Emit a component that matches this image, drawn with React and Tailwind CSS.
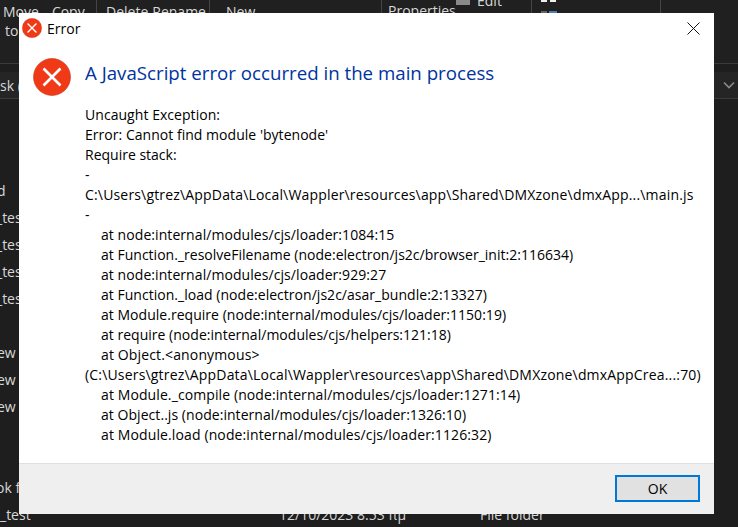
const lines = [
  ["Uncaught Exception:", "tracking-[0.05px]"],
  ["Error: Cannot find module 'bytenode'", "tracking-[0.03px]"],
  ["Require stack:", ""],
  ["-", ""],
  ["C:\\Users\\gtrez\\AppData\\Local\\Wappler\\resources\\app\\Shared\\DMXzone\\dmxApp...\\main.js", "tracking-[0.17px]"],
  ["-", ""],
  ["at node:internal/modules/cjs/loader:1084:15", "pl-[16px] tracking-[0.07px]"],
  ["at Function._resolveFilename (node:electron/js2c/browser_init:2:116634)", "pl-[16px] tracking-[0.015px]"],
  ["at node:internal/modules/cjs/loader:929:27", "pl-[16px] tracking-[0.07px]"],
  ["at Function._load (node:electron/js2c/asar_bundle:2:13327)", "pl-[16px] tracking-[0.03px]"],
  ["at Module.require (node:internal/modules/cjs/loader:1150:19)", "pl-[16px] tracking-[0.03px]"],
  ["at require (node:internal/modules/cjs/helpers:121:18)", "pl-[16px] tracking-[0.02px]"],
  ["at Object.<anonymous>", "pl-[16px] tracking-[0.14px]"],
  ["(C:\\Users\\gtrez\\AppData\\Local\\Wappler\\resources\\app\\Shared\\DMXzone\\dmxAppCrea...:70)", "tracking-[0.18px]"],
  ["at Module._compile (node:internal/modules/cjs/loader:1271:14)", "pl-[16px] tracking-[0.1px]"],
  ["at Object..js (node:internal/modules/cjs/loader:1326:10)", "pl-[16px] tracking-[0.05px]"],
  ["at Module.load (node:internal/modules/cjs/loader:1126:32)", "pl-[16px] tracking-[0.12px]"],
];

const rows = [
  ["d", "-ml-[3px]"],
  ["_test", "-ml-[4px]"],
  ["_test", "-ml-[4px]"],
  ["_test", "-ml-[4px]"],
  ["_test", "-ml-[4px]"],
  ["", ""],
  ["ew", "-ml-[3px]"],
  ["ew", "-ml-[3px]"],
  ["ew", "-ml-[3px]"],
  ["", ""],
  ["", ""],
  ["ok f", "-ml-[4px]"],
];

function ErrorIcon({ size }) {
  return (
    <svg width={size} height={size} viewBox="0 0 38 38" className="shrink-0">
      <circle cx="19" cy="19" r="18.5" fill="#f03a17" stroke="#c8341a" strokeWidth="0.6" />
      <path d="M10.5 10.5 L27.5 27.5 M27.5 10.5 L10.5 27.5" stroke="#fff" strokeWidth="2.6" fill="none" />
    </svg>
  );
}

export default function App() {
  return (
    <div className="relative w-[738px] h-[527px] overflow-hidden flex flex-col bg-[#1e1e1e] text-[14px] leading-[19px] text-[#d8d8d8] font-['Open_Sans','Noto_Sans',sans-serif]">
      {/* explorer ribbon */}
      <div className="h-[64px] shrink-0 flex bg-[#202020] border-b border-[#3a3a3a]">
        <div className="w-[97px] flex gap-[13px] pl-[3px] pt-[2px] border-r border-[#444]">
          <div className="flex flex-col"><span>Move</span><span className="pl-[2px]">to</span></div>
          <span>Copy</span>
        </div>
        <div className="w-[113px] flex gap-[4px] pl-[9px] pt-[2px] border-r border-[#444]">
          <span>Delete</span><span>Rename</span>
        </div>
        <div className="w-[172px] pl-[16px] pt-[2px] border-r border-[#444]">New</div>
        <div className="w-[150px] flex pl-[6px] border-r border-[#444]">
          <span className="w-[62px] pt-[1px]">Properties</span>
          <div className="ml-[6px] w-[14px] h-[5px] bg-[#8a8a8a]" />
          <span className="ml-[7px] -mt-[9px]">Edit</span>
        </div>
        <div className="w-[129px] flex flex-col gap-[9px] pl-[9px] border-r border-[#444]">
          <div className="flex gap-[3px]"><div className="w-[6px] h-[2px] bg-[#eee]" /><div className="w-[6px] h-[2px] bg-[#eee]" /></div>
          <div className="flex gap-[2px]"><div className="w-[6px] h-[2px] bg-[#666]" /><div className="w-[8px] h-[2px] bg-[#4a80b0]" /></div>
        </div>
      </div>
      {/* address bar */}
      <div className="mt-[8px] h-[27px] shrink-0 flex items-center justify-between pr-[3px] bg-[#252525] border-b border-[#3a3a3a]">
        <span>sk (</span>
        <svg width="12" height="8" viewBox="0 0 12 8">
          <path d="M1 1.5 L6 6.5 L11 1.5" stroke="#8a8a8a" strokeWidth="1.6" fill="none" />
        </svg>
      </div>
      {/* file list */}
      <div className="pt-[78px] flex flex-col">
        {rows.map(([t, cls], i) => (
          <div key={i} className={"h-[27px] flex items-center whitespace-nowrap " + cls}>{t}</div>
        ))}
        <div className="h-[27px] grid grid-cols-[279px_201px_1fr] items-center whitespace-nowrap">
          <span>_test</span>
          <span>12/10/2023 8:53 πμ</span>
          <span>File folder</span>
        </div>
      </div>

      {/* dialog window */}
      <div className="absolute left-[19px] top-[13px] w-[695px] h-[501px] flex flex-col bg-white">
        <div className="h-[30px] flex items-center pl-[3px] pr-[14px]">
          <ErrorIcon size={20} />
          <span className="ml-[5px] text-black">Error</span>
          <svg className="ml-auto" width="13" height="13" viewBox="0 0 13 13">
            <path d="M0.5 0.5 L12.5 12.5 M12.5 0.5 L0.5 12.5" stroke="#111" strokeWidth="1" fill="none" />
          </svg>
        </div>
        <div className="flex-1 flex pl-[14px] pt-[15px]">
          <ErrorIcon size={38} />
          <div className="ml-[14px] flex flex-col">
            <div className="text-[18.7px] leading-[30px] text-[#0033a0] whitespace-nowrap">A JavaScript error occurred in the main process</div>
            <div className="mt-[17px] leading-[20px] text-black">
              {lines.map(([t, cls], i) => (
                <div key={i} className={"whitespace-nowrap " + cls}>{t}</div>
              ))}
            </div>
          </div>
        </div>
        <div className="h-[51px] flex items-start justify-end pt-[11px] pr-[14px] bg-[#efefef] border-t border-[#dfdfdf]">
          <button className="w-[85px] h-[27px] flex items-center justify-center border-2 border-[#0078d7] bg-[#e1e1e1] text-black">OK</button>
        </div>
      </div>
    </div>
  );
}
